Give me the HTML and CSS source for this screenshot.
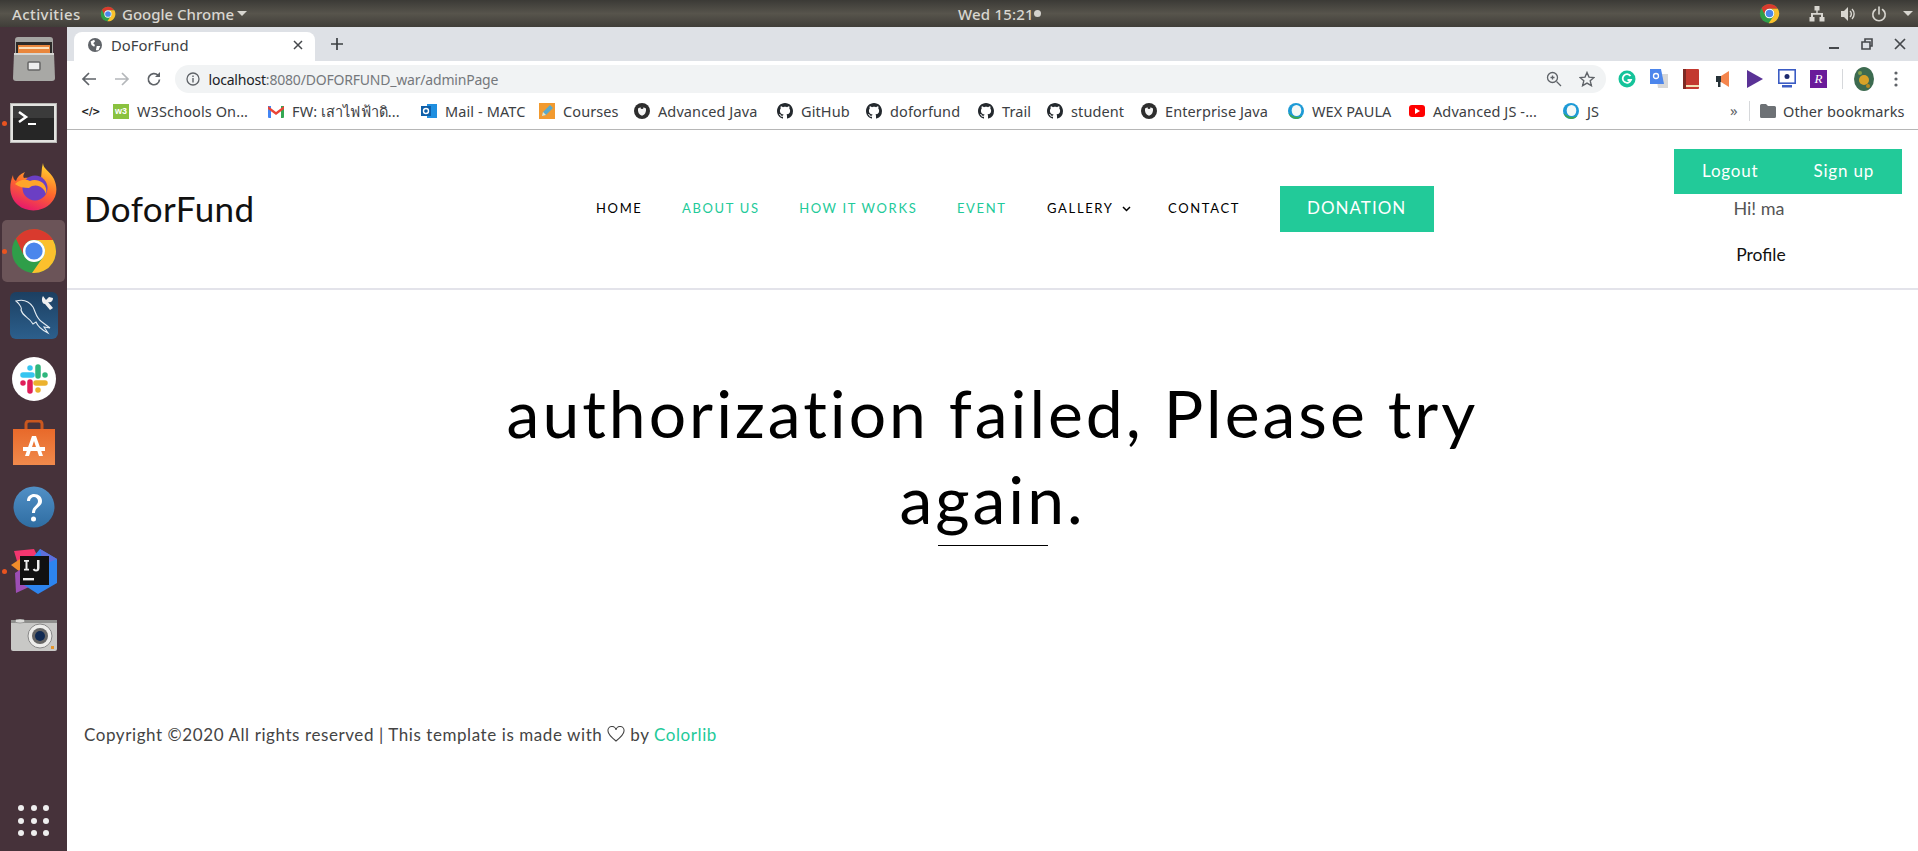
FILE: index.html
```html
<!DOCTYPE html>
<html lang="en">
<head>
<meta charset="utf-8">
<title>DoForFund</title>
<link rel="stylesheet" href="styles.css">
</head>
<body>
<svg class="defs" width="0" height="0">
  <symbol id="chrome" viewBox="0 0 48 48">
    <circle cx="24" cy="24" r="22" fill="#2f9e49"/>
    <path d="M5.900 11.500A22 22 0 0 1 43 13H24A11 11 0 0 0 14 29Z" fill="#d93a2e"/>
    <path d="M43 13A22 22 0 0 1 22 46L33.500 29.500A11 11 0 0 0 24 13Z" fill="#fbc02d"/>
    <circle cx="24" cy="24" r="11" fill="#fff"/>
    <circle cx="24" cy="24" r="8.600" fill="#4a86ec"/>
  </symbol>
  <symbol id="gh" viewBox="0 0 16 16">
    <path fill="#24292e" d="M8 0C3.580 0 0 3.580 0 8c0 3.540 2.290 6.530 5.470 7.590.4.070.55-.17.55-.38 0-.19-.01-.82-.01-1.490-2.010.37-2.530-.49-2.690-.94-.09-.23-.48-.94-.82-1.130-.28-.15-.68-.52-.01-.53.63-.01 1.080.58 1.230.82.72 1.210 1.870.87 2.330.66.07-.52.28-.87.51-1.070-1.780-.2-3.640-.89-3.640-3.950 0-.87.31-1.590.82-2.150-.08-.2-.36-1.020.08-2.120 0 0 .67-.21 2.200.82.64-.18 1.320-.27 2-.27.68 0 1.360.09 2 .27 1.530-1.040 2.200-.82 2.200-.82.44 1.100.16 1.920.08 2.120.51.56.82 1.270.82 2.150 0 3.070-1.870 3.750-3.650 3.950.29.25.54.73.54 1.480 0 1.070-.01 1.930-.01 2.200 0 .21.15.46.55.38A8.013 8.013 0 0016 8c0-4.420-3.580-8-8-8z"/>
  </symbol>
  <symbol id="blackball" viewBox="0 0 16 16">
    <circle cx="8" cy="8" r="8" fill="#2d2d2d"/>
    <path d="M4 5.500 8 3.600l4 1.900c.4 3.600-1 6.400-4 7.200-3-.8-4.400-3.600-4-7.200Z" fill="#f4f4f4"/>
    <circle cx="8" cy="4.600" r="1.500" fill="#2d2d2d"/>
  </symbol>
  <symbol id="webex" viewBox="0 0 16 16">
    <circle cx="8" cy="8" r="8" fill="#1d9ad6"/>
    <path d="M.5 10a8 8 0 0 0 14 3c-3 1.500-10 1.500-14-3Z" fill="#3aa655"/>
    <ellipse cx="8.500" cy="7.500" rx="4.800" ry="5.500" fill="#f4f8f6"/>
  </symbol>
</svg>

<header class="topbar">
  <span class="tb-activities">Activities</span>
  <svg class="tb-chrome" width="16" height="16"><use href="#chrome"/></svg>
  <span class="tb-app">Google Chrome</span>
  <i class="tb-caret"></i>
  <span class="tb-clock">Wed 15:21</span><i class="tb-dot"></i>
  <svg class="tb-tray-chrome" width="21" height="21"><use href="#chrome"/></svg>
  <svg class="tb-ico net" width="16" height="16" viewBox="0 0 16 16"><path fill="#d8d6d0" d="M5.500 0h5v4.500H8.700V7H14v4h1.500v4.500h-5V11H12V8.700H4V11h1.500v4.500h-5V11H2V7h5.300V4.500H5.500Z"/></svg>
  <svg class="tb-ico vol" width="16" height="16" viewBox="0 0 16 16"><path fill="#d8d6d0" d="M1 5h3l4-4v14l-4-4H1Z"/><path fill="none" stroke="#d8d6d0" stroke-width="1.400" d="M10 5a4 4 0 0 1 0 6M12 3a7 7 0 0 1 0 10"/></svg>
  <svg class="tb-ico pow" width="16" height="16" viewBox="0 0 16 16"><path fill="none" stroke="#d8d6d0" stroke-width="1.600" stroke-linecap="round" d="M8 1v7M4.500 3.500a6.200 6.200 0 1 0 7 0"/></svg>
  <i class="tb-caret tb-caret-r"></i>
</header>

<div class="desk">
  <nav class="dock">
    <div class="dock-item">
      <svg width="44" height="46" viewBox="0 0 44 46">
        <path d="M3 4a3 3 0 0 1 3-3h32a3 3 0 0 1 3 3v14H3Z" fill="#a5a5a2"/>
        <rect x="4" y="6" width="36" height="12" fill="#2c2a28"/>
        <rect x="6" y="9" width="32" height="9" fill="#e9863c"/>
        <rect x="7" y="11" width="30" height="2" fill="#fbe0bb"/>
        <path d="M2 17h40l1 25a3 3 0 0 1-3 3H4a3 3 0 0 1-3-3Z" fill="#a8a8a5"/>
        <path d="M2 17h40v2H2Z" fill="#d6d6d3"/>
        <rect x="16" y="26" width="12" height="8" rx="1" fill="#eee" stroke="#666" stroke-width="1.500"/>
      </svg>
    </div>
    <div class="dock-item has-dot">
      <svg width="47" height="40" viewBox="0 0 47 40">
        <rect width="47" height="40" fill="#b9b9b6"/>
        <rect x="1" y="1" width="45" height="38" fill="#e3e3e0"/>
        <rect x="3" y="3" width="41" height="34" fill="#262626"/>
        <rect x="3" y="3" width="41" height="12" fill="#3b3b3b"/>
        <path d="M9 9l7 5-7 5" fill="none" stroke="#fff" stroke-width="2.500"/>
        <path d="M18 21h8" stroke="#fff" stroke-width="2"/>
      </svg>
    </div>
    <div class="dock-item">
      <svg width="48" height="48" viewBox="0 0 48 48">
        <defs><linearGradient id="ff" x1=".7" y1="0" x2=".3" y2="1"><stop offset="0" stop-color="#ffd52e"/><stop offset=".5" stop-color="#ff6a2b"/><stop offset="1" stop-color="#e6156f"/></linearGradient></defs>
        <path d="M33 0c0 6 7 8 11 16 4 9 3 18-3 24-8 9-24 10-33 2C0 35-2 24 3 12c0 3 1 5 3 6 1-4 4-7 9-9-2 3-2 5-1 6 6-1 12 1 16 5 2-7 1-14 3-20Z" fill="url(#ff)"/>
        <circle cx="25" cy="25" r="12.500" fill="#6b3fc4"/>
        <path d="M5 21c5-5 11-5 15-3 4-2 9-1 13 2 3 3 4 7 3 11-2-6-7-10-14-8-2 1-3 2-3 2-5 0-10-1-14-4Z" fill="#ffa52b"/>
      </svg>
    </div>
    <div class="dock-item has-dot active">
      <svg width="48" height="48"><use href="#chrome"/></svg>
    </div>
    <div class="dock-item">
      <svg width="48" height="47" viewBox="0 0 48 47">
        <defs><linearGradient id="my" x1="0" y1="0" x2="0" y2="1"><stop offset="0" stop-color="#1c3f61"/><stop offset="1" stop-color="#2c5f8c"/></linearGradient></defs>
        <rect width="48" height="47" rx="6" fill="url(#my)"/>
        <path d="M6 9c7-2 13 0 17 6 3 6 3 11 9 15l8 6-6-1 4 6c-6-3-10-6-12-11l-3 2c-4-7-10-7-12-14 1-1 0-5-5-9Z" fill="none" stroke="#e4ecf2" stroke-width="1.100"/>
        <path d="M33 4l3 4 3-3 4 1c0 3-2 5-5 4l5 6-3 2-5-6c-3 0-4-5-2-8Z" fill="#f0f0f0"/>
      </svg>
    </div>
    <div class="dock-item">
      <svg width="44" height="44" viewBox="0 0 44 44">
        <circle cx="22" cy="22" r="22" fill="#fff"/>
        <g stroke-width="5.500" stroke-linecap="round" fill="none">
          <path d="M11 18h9M18 11v0" stroke="#36c5f0"/>
          <path d="M26 10v9M33 18v0" stroke="#2eb67d"/>
          <path d="M24 26h9M26 33v0" stroke="#ecb22e"/>
          <path d="M18 25v9M11 26v0" stroke="#e01e5a"/>
        </g>
      </svg>
    </div>
    <div class="dock-item">
      <svg width="44" height="46" viewBox="0 0 44 46">
        <defs><linearGradient id="st" x1="0" y1="0" x2="0" y2="1"><stop offset="0" stop-color="#e8692a"/><stop offset="1" stop-color="#f08a4c"/></linearGradient></defs>
        <path d="M14 12V4a3 3 0 0 1 3-3h10a3 3 0 0 1 3 3v8" fill="none" stroke="#c9571f" stroke-width="3"/>
        <path d="M1 9h42v36H1Z" fill="url(#st)"/>
        <path d="M13 36l7-20h4l7 20h-4l-5-15-5 15Z" fill="#fff"/>
        <rect x="11" y="27" width="22" height="4" fill="#fff"/>
      </svg>
    </div>
    <div class="dock-item">
      <svg width="42" height="42" viewBox="0 0 42 42">
        <defs><linearGradient id="hp" x1="0" y1="0" x2="0" y2="1"><stop offset="0" stop-color="#5190c6"/><stop offset="1" stop-color="#2f6da2"/></linearGradient></defs>
        <circle cx="21" cy="21" r="20.500" fill="url(#hp)"/>
        <path d="M14 15c0-5 4-7 7-7 5 0 8 3 8 7 0 6-7 6-7 12h-3c0-7 6-7 6-12 0-2-2-4-4-4s-4 2-4 4Z" fill="#fff"/>
        <circle cx="20.500" cy="33" r="2.500" fill="#fff"/>
      </svg>
    </div>
    <div class="dock-item has-dot">
      <svg width="48" height="48" viewBox="0 0 48 48">
        <path d="M4 4l20-2 6 12-20 10Z" fill="#f2366f"/>
        <path d="M1 18l9-6 4 16Z" fill="#f18d2a"/>
        <path d="M5 26l12-8 2 22-13 6Z" fill="#9c4eb5"/>
        <path d="M30 2l17 10v24L28 47 14 38l4-22Z" fill="#2d84ee"/>
        <path d="M30 2l17 10-14 6Z" fill="#5e6fdc"/>
        <rect x="10" y="9" width="29" height="29" fill="#111"/>
        <rect x="13" y="31" width="11" height="2.400" fill="#eee"/>
        <path d="M14 13h5v1.800h-1.500v7H19v1.800h-5v-1.800h1.500v-7H14Zm13 0h2.500v8c0 2.500-1.500 3.500-3.500 3.500-1.500 0-2.800-.7-3.300-2l1.800-1c.3.700.8 1 1.400 1 .8 0 1.100-.5 1.100-1.500Z" fill="#eee"/>
      </svg>
    </div>
    <div class="dock-item">
      <svg width="46" height="32" viewBox="0 0 46 32">
        <rect y="1" width="46" height="31" rx="2" fill="#c8c8c6"/>
        <path d="M0 1h46v3H0Z" fill="#8f8f8d"/>
        <ellipse cx="9" cy="2" rx="5" ry="2" fill="#dcdcda" stroke="#777" stroke-width=".6"/>
        <circle cx="29" cy="17" r="12" fill="#ededeb" stroke="#888"/>
        <circle cx="29" cy="17" r="8" fill="#666"/>
        <circle cx="29" cy="17" r="5" fill="#102a52"/>
        <rect x="40" y="27" width="3" height="3" fill="#e5952b"/>
      </svg>
    </div>
    <div class="dock-apps">
      <i></i><i></i><i></i><i></i><i></i><i></i><i></i><i></i><i></i>
    </div>
  </nav>

  <div class="browser">
    <div class="tabstrip">
      <div class="tab">
        <svg width="14" height="14" viewBox="0 0 16 16"><circle cx="8" cy="8" r="8" fill="#5f6368"/><path d="M3 4l4-2 1 2-2 2 2 2-1 2-3-2ZM10 9l4 0-2 5-3 0Z" fill="#fff"/></svg>
        <span class="tab-title">DoForFund</span>
        <svg class="tab-close" width="10" height="10" viewBox="0 0 10 10"><path d="M1 1l8 8M9 1l-8 8" stroke="#45484c" stroke-width="1.500"/></svg>
      </div>
      <svg class="tab-plus" width="14" height="14" viewBox="0 0 14 14"><path d="M7 1v12M1 7h12" stroke="#3c4043" stroke-width="1.700"/></svg>
      <div class="winctl">
        <svg width="12" height="12" viewBox="0 0 12 12"><path d="M1 10h10" stroke="#45484c" stroke-width="2"/></svg>
        <svg width="12" height="12" viewBox="0 0 12 12"><path d="M4 1h7v7H9v3H1V4h3Z M4 4h5v4" fill="none" stroke="#45484c" stroke-width="1.600"/></svg>
        <svg width="12" height="12" viewBox="0 0 12 12"><path d="M1 1l10 10M11 1L1 11" stroke="#45484c" stroke-width="1.700"/></svg>
      </div>
    </div>

    <div class="toolbar">
      <svg class="tool" width="16" height="16" viewBox="0 0 16 16"><path d="M15 8H2M8 2L2 8l6 6" fill="none" stroke="#5f6368" stroke-width="1.700"/></svg>
      <svg class="tool" width="16" height="16" viewBox="0 0 16 16"><path d="M1 8h13M8 2l6 6-6 6" fill="none" stroke="#b4b7ba" stroke-width="1.700"/></svg>
      <svg class="tool" width="16" height="16" viewBox="0 0 16 16"><path d="M13.500 8.500a5.600 5.600 0 1 1-1.600-4.300" fill="none" stroke="#5f6368" stroke-width="1.700"/><path d="M14 1v5H9Z" fill="#5f6368"/></svg>
      <div class="omnibox">
        <svg width="14" height="14" viewBox="0 0 14 14"><circle cx="7" cy="7" r="6" fill="none" stroke="#5f6368" stroke-width="1.300"/><path d="M7 6v4.500M7 3.500v1.500" stroke="#5f6368" stroke-width="1.400"/></svg>
        <span class="url"><b>localhost</b>:8080/DOFORFUND_war/adminPage</span>
        <svg class="omni-zoom" width="16" height="16" viewBox="0 0 16 16"><circle cx="6.500" cy="6.500" r="5" fill="none" stroke="#5f6368" stroke-width="1.300"/><path d="M10.500 10.500L15 15M4.500 6.500h4M6.500 4.500v4" stroke="#5f6368" stroke-width="1.300"/></svg>
        <svg class="omni-star" width="16" height="16" viewBox="0 0 16 16"><path d="M8 1.500l2 4.600 5 .4-3.800 3.300 1.200 4.900L8 12.100l-4.400 2.600 1.200-4.900L1 6.500l5-.4Z" fill="none" stroke="#5f6368" stroke-width="1.400"/></svg>
      </div>
      <div class="exts">
        <svg width="18" height="18" viewBox="0 0 18 18"><circle cx="9" cy="9" r="8.500" fill="#15c39a"/><path d="M12.500 6a4.300 4.300 0 1 0 .5 4H9.500" fill="none" stroke="#fff" stroke-width="1.800"/></svg>
        <svg width="18" height="20" viewBox="0 0 18 20"><path d="M6 5h12v14H8Z" fill="#d8d8d8"/><path d="M0 0h11l3 15H0Z" fill="#4c86ec"/><circle cx="6" cy="7" r="2.500" fill="none" stroke="#fff" stroke-width="1.300"/></svg>
        <svg width="16" height="20" viewBox="0 0 16 20"><rect width="16" height="20" rx="1" fill="#c3392f"/><rect y="16" width="16" height="2" fill="#f2e2b5"/><rect width="3" height="20" fill="#7d2a24"/></svg>
        <svg width="18" height="18" viewBox="0 0 18 18"><path d="M2 6h5v6H2Z" fill="#263238"/><path d="M7 6l8-5v16l-8-5Z" fill="#f4854d"/><path d="M4 12h2.500v5H4Z" fill="#263238"/></svg>
        <svg width="16" height="18" viewBox="0 0 16 18"><path d="M0 0l16 9L0 18Z" fill="#5a3296"/></svg>
        <svg width="18" height="20" viewBox="0 0 18 20"><rect x=".8" y=".8" width="16.400" height="13.400" fill="#fff" stroke="#3b5cc4" stroke-width="1.600"/><circle cx="9" cy="7.500" r="2.500" fill="#1c2a6e"/><rect x="4" y="16" width="10" height="2.500" fill="#3b5cc4"/></svg>
        <span class="ext-r">R</span>
      </div>
      <i class="tool-sep"></i>
      <svg class="avatar" width="20" height="24" viewBox="0 0 20 24"><ellipse cx="10" cy="12" rx="10" ry="12" fill="#3d6b50"/><circle cx="10" cy="13" r="5" fill="#d8a228"/><circle cx="6" cy="6" r="2" fill="#82a04a"/><circle cx="14" cy="19" r="2" fill="#b88a20"/></svg>
      <svg class="menu" width="4" height="16" viewBox="0 0 4 16"><circle cx="2" cy="2" r="1.600" fill="#5f6368"/><circle cx="2" cy="8" r="1.600" fill="#5f6368"/><circle cx="2" cy="14" r="1.600" fill="#5f6368"/></svg>
    </div>

    <div class="bookmarks">
      <div class="bm bm-code"><span class="code">&lt;/&gt;</span></div>
      <div class="bm"><span class="ic-w3">w3</span><span>W3Schools On...</span></div>
      <div class="bm"><svg width="16" height="13" viewBox="0 0 16 13"><path d="M0 1h3v12H1a1 1 0 0 1-1-1Z" fill="#4285f4"/><path d="M13 1h3v11a1 1 0 0 1-1 1h-2Z" fill="#34a853"/><path d="M0 1l8 6 8-6v3l-8 6-8-6Z" fill="#ea4335"/></svg><span>FW: เสาไฟฟ้าดิ...</span></div>
      <div class="bm"><svg width="16" height="16" viewBox="0 0 16 16"><rect x="6" y="1" width="10" height="14" fill="#1f8fe0"/><rect y="3" width="10" height="10" fill="#0f5fa8"/><circle cx="5" cy="8" r="2.500" fill="none" stroke="#fff" stroke-width="1.400"/></svg><span>Mail - MATC</span></div>
      <div class="bm"><svg width="16" height="16" viewBox="0 0 16 16"><rect width="16" height="16" fill="#f29a2e"/><path d="M3 13l1-4 7-7 3 3-7 7Z" fill="#5aa9c9"/><path d="M3 13l1-4 3 3Z" fill="#f6e3b4"/></svg><span>Courses</span></div>
      <div class="bm"><svg width="16" height="16"><use href="#blackball"/></svg><span>Advanced Java</span></div>
      <div class="bm"><svg width="16" height="16"><use href="#gh"/></svg><span>GitHub</span></div>
      <div class="bm"><svg width="16" height="16"><use href="#gh"/></svg><span>doforfund</span></div>
      <div class="bm"><svg width="16" height="16"><use href="#gh"/></svg><span>Trail</span></div>
      <div class="bm"><svg width="16" height="16"><use href="#gh"/></svg><span>student</span></div>
      <div class="bm"><svg width="16" height="16"><use href="#blackball"/></svg><span>Enterprise Java</span></div>
      <div class="bm"><svg width="16" height="16"><use href="#webex"/></svg><span>WEX PAULA</span></div>
      <div class="bm"><svg width="16" height="12" viewBox="0 0 16 12"><rect width="16" height="12" rx="3" fill="#f00"/><path d="M6 3l5 3-5 3Z" fill="#fff"/></svg><span>Advanced JS -...</span></div>
      <div class="bm"><svg width="16" height="16"><use href="#webex"/></svg><span>JS</span></div>
      <span class="bm-more">»</span>
      <i class="bm-sep"></i>
      <div class="bm bm-other"><svg width="16" height="14" viewBox="0 0 16 14"><path d="M0 1.500A1.500 1.500 0 0 1 1.500 0H6l2 2h6.500A1.500 1.500 0 0 1 16 3.500v9a1.500 1.500 0 0 1-1.500 1.500h-13A1.500 1.500 0 0 1 0 12.500Z" fill="#6d7175"/></svg><span>Other bookmarks</span></div>
    </div>

    <main class="page">
      <div class="site-head">
        <a class="logo">DoforFund</a>
        <ul class="nav">
          <li>HOME</li>
          <li class="on">ABOUT US</li>
          <li class="on">HOW IT WORKS</li>
          <li class="on">EVENT</li>
          <li class="has-sub">GALLERY<svg width="9" height="6" viewBox="0 0 9 6"><path d="M1 1l3.500 3.500L8 1" fill="none" stroke="#000" stroke-width="1.500"/></svg></li>
          <li>CONTACT</li>
          <li class="donate">DONATION</li>
        </ul>
        <div class="account">
          <div class="acct-btns"><span>Logout</span><span>Sign up</span></div>
          <div class="acct-hi">Hi! ma</div>
          <div class="acct-profile">Profile</div>
        </div>
      </div>
      <section class="message">
        <h1>authorization failed, Please try again.</h1>
        <i class="rule"></i>
      </section>
      <footer class="foot">Copyright ©2020 All rights reserved | This template is made with <svg width="18" height="16" viewBox="0 0 18 16"><path d="M9 15C4 11 1 8 1 5a4 4 0 0 1 8-1 4 4 0 0 1 8 1c0 3-3 6-8 10Z" fill="none" stroke="#444" stroke-width="1.100"/></svg> by <a>Colorlib</a></footer>
    </main>
  </div>
</div>
</body>
</html>
```
FILE: styles.css
```css
* { box-sizing: border-box; }
html, body { margin: 0; height: 851px; overflow: hidden; }
body { display: flex; flex-direction: column; font-family: "Noto Sans", sans-serif; background: #fff; }
.defs { position: absolute; }
i { display: block; }

.topbar { height: 27px; flex: none; display: flex; align-items: center; background: linear-gradient(#3b3a36, #57544c 50%, #403e39); color: #d8d6d0; font-size: 15px; font-weight: 500; padding-left: 12px; }
.tb-activities { width: 88px; white-space: nowrap; letter-spacing: .4px; }
.tb-chrome { margin-right: 6px; }
.tb-app { width: 115px; white-space: nowrap; }
.tb-caret { width: 0; height: 0; border: 5px solid transparent; border-top: 5px solid #d8d6d0; border-bottom: 0; }
.tb-clock { margin-left: 711px; white-space: nowrap; width: 76px; letter-spacing: .2px; }
.tb-dot { width: 7px; height: 7px; border-radius: 50%; background: #d4d2cd; }
.tb-tray-chrome { margin-left: 718px; }
.tb-ico { margin-left: 15px; }
.net { margin-left: 29px; }
.tb-caret-r { margin-left: 16px; }

.desk { flex: 1; display: flex; min-height: 0; }
.dock { width: 67px; flex: none; background: #46323a; display: flex; flex-direction: column; align-items: center; }
.dock-item { height: 64px; width: 100%; flex: none; display: flex; align-items: center; justify-content: center; position: relative; }
.dock-item.active::before { content: ""; position: absolute; left: 2px; right: 2px; top: 1px; bottom: 1px; background: #6b5458; border-radius: 5px; }
.dock-item svg { position: relative; }
.has-dot::after { content: ""; position: absolute; left: 2px; top: 50%; width: 5px; height: 5px; margin-top: -2px; border-radius: 50%; background: #e95420; }
.dock-apps { margin-top: auto; margin-bottom: 15px; display: grid; grid-template-columns: repeat(3, 6px); gap: 6.500px; }
.dock-apps i { width: 6px; height: 6px; border-radius: 50%; background: #eee; }

.browser { flex: 1; min-width: 0; display: flex; flex-direction: column; }
.tabstrip { height: 34px; flex: none; background: #dee1e6; display: flex; align-items: flex-end; padding-left: 7px; }
.tab { width: 241px; height: 29px; background: #fff; border-radius: 8px 8px 0 0; display: flex; align-items: center; padding: 0 12px 4px 14px; gap: 9px; }
.tab-title { flex: 1; font-size: 14.800px; color: #3c4043; }
.tab-plus { margin: 0 0 10px 15px; }
.winctl { margin-left: auto; margin-bottom: 11px; margin-right: 12px; display: flex; gap: 21px; }

.toolbar { height: 36px; flex: none; background: #fff; display: flex; align-items: center; padding-left: 14px; }
.tool { margin-right: 16.500px; }
.omnibox { width: 1431px; height: 28px; margin-left: -4px; background: #f1f3f4; border-radius: 14px; display: flex; align-items: center; padding-left: 11px; margin-right: 5px; flex: none; }
.url { margin-left: 9px; flex: 1; font-size: 14px; color: #75787c; letter-spacing: -.2px; }
.url b { font-weight: 400; color: #202124; }
.omni-zoom { margin-right: 17px; }
.omni-star { margin-right: 11px; }
.exts { display: grid; grid-template-columns: repeat(7, 32px); align-items: center; justify-items: center; }
.ext-r { width: 17px; height: 18px; background: #6a1b9a; color: #fff; font: italic 13px "Liberation Serif", serif; display: flex; align-items: center; justify-content: center; }
.tool-sep { width: 1px; height: 20px; background: #d6d8db; margin-left: 7px; }
.avatar { margin-left: 11px; }
.menu { margin-left: 20px; }

.bookmarks { height: 33px; flex: none; background: #fff; display: flex; align-items: center; padding: 0 0 4px 14px; font-size: 14.500px; letter-spacing: .1px; color: #3c4043; white-space: nowrap; border-bottom: 1px solid #b6b6b6; }
.bm { display: flex; align-items: center; gap: 8px; }
.bm:nth-child(1) { width: 32px; }
.bm:nth-child(2) { width: 155px; }
.bm:nth-child(3) { width: 153px; }
.bm:nth-child(4) { width: 118px; }
.bm:nth-child(5) { width: 95px; }
.bm:nth-child(6) { width: 143px; }
.bm:nth-child(7) { width: 89px; }
.bm:nth-child(8) { width: 112px; }
.bm:nth-child(9) { width: 69px; }
.bm:nth-child(10) { width: 94px; }
.bm:nth-child(11) { width: 147px; }
.bm:nth-child(12) { width: 121px; }
.bm:nth-child(13) { width: 154px; }
.bm:nth-child(14) { width: 167px; }
.code { font: 700 10px "DejaVu Sans", sans-serif; color: #222; letter-spacing: -.5px; }
.ic-w3 { width: 16px; height: 15px; background: #8ac23f; color: #fff; font: 700 9px "Liberation Sans", sans-serif; text-align: center; line-height: 15px; }
.bm-more { width: 19px; color: #5f6368; font-size: 15px; margin-top: -3px; }
.bm-sep { width: 1px; height: 20px; background: #d6d8db; margin-right: 10px; }
.bookmarks .bm-other { gap: 7px; }

.page { flex: 1; min-height: 0; background: #fff; font-family: Lato, sans-serif; }
.site-head { height: 160px; border-bottom: 2px solid #e3e3ea; display: flex; align-items: center; padding-left: 17px; }
.logo { width: 512px; font-size: 35px; color: #111; letter-spacing: .4px; flex: none; padding-bottom: 3px; }
.nav { list-style: none; margin: 0; padding: 0; display: flex; align-items: center; gap: 39.500px; font-size: 13px; letter-spacing: 1.650px; color: #000; white-space: nowrap; }
.nav li { padding-bottom: 3px; }
.nav .on { color: #22ca99; }
.nav .has-sub { display: flex; align-items: center; gap: 8px; margin-left: 1px; margin-right: -2px; }
.has-sub svg { margin-top: 3px; }
.nav .donate { width: 154px; height: 46px; background: #22ca99; color: #fff; font-size: 17px; letter-spacing: 1px; display: flex; align-items: center; justify-content: center; }
.account { width: 228px; align-self: flex-start; margin-left: auto; margin-right: 16px; margin-top: 19px; text-align: center; }
.acct-btns { height: 45px; background: #22ca99; color: #fff; font-size: 17px; letter-spacing: .8px; display: flex; align-items: center; justify-content: space-between; padding: 0 28px 3px; }
.acct-hi { font-size: 18px; color: #555; margin: 0 58px 0 0; height: 28px; line-height: 28px; }
.acct-profile { font-size: 17.500px; color: #111; margin: 23px 54px 0 0; line-height: 20px; }

.message { height: 434px; display: flex; flex-direction: column; align-items: center; padding-top: 80px; }
.message h1 { margin: 0; width: 1010px; text-align: center; font-size: 66px; line-height: 86px; font-weight: 400; letter-spacing: 3px; color: #000; }
.rule { width: 110px; height: 1px; background: #000; margin-top: 3px; }
.foot { padding-left: 17px; font-size: 17px; color: #444; letter-spacing: .58px; display: block; }
.foot svg { vertical-align: -1px; }
.foot a { color: #22ca99; }
```
